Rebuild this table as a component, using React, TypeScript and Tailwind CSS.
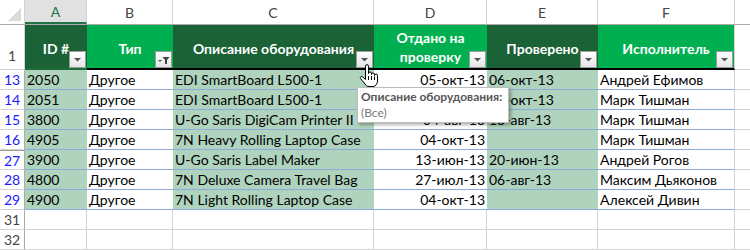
import React from 'react';

const colWidths = ['w-[62px]', 'w-[86px]', 'w-[201px]', 'w-[113px]', 'w-[111px]', 'w-[137px]'];
const letters = ['A', 'B', 'C', 'D', 'E', 'F'];
const headFills = ['bg-[#1b6236]', 'bg-[#00b050]', 'bg-[#1b6236]', 'bg-[#00b050]', 'bg-[#1b6236]', 'bg-[#00b050]'];
const bodyFills = ['bg-[#afd3bd]', 'bg-white', 'bg-[#afd3bd]', 'bg-white', 'bg-[#afd3bd]', 'bg-white'];

interface IRow {
    n: number;
    id: string;
    type: string;
    desc: string;
    sent: string;
    checked: string;
    person: string;
}

const rows: IRow[] = [
    { n: 13, id: '2050', type: 'Другое', desc: 'EDI SmartBoard L500-1', sent: '05-окт-13', checked: '06-окт-13', person: 'Андрей Ефимов' },
    { n: 14, id: '2051', type: 'Другое', desc: 'EDI SmartBoard L500-1', sent: '05-окт-13', checked: '06-окт-13', person: 'Марк Тишман' },
    { n: 15, id: '3800', type: 'Другое', desc: 'U-Go Saris DigiCam Printer II', sent: '04-авг-13', checked: '13-авг-13', person: 'Марк Тишман' },
    { n: 16, id: '4905', type: 'Другое', desc: '7N Heavy Rolling Laptop Case', sent: '04-окт-13', checked: '', person: 'Марк Тишман' },
    { n: 27, id: '3900', type: 'Другое', desc: 'U-Go Saris Label Maker', sent: '13-июн-13', checked: '20-июн-13', person: 'Андрей Рогов' },
    { n: 28, id: '4800', type: 'Другое', desc: '7N Deluxe Camera Travel Bag', sent: '27-июл-13', checked: '06-авг-13', person: 'Максим Дьяконов' },
    { n: 29, id: '4900', type: 'Другое', desc: '7N Light Rolling Laptop Case', sent: '04-окт-13', checked: '', person: 'Алексей Дивин' },
];

const FilterButton = ({ filtered }: { filtered?: boolean }) => (
    <div className="absolute right-[1px] bottom-0 w-[17px] h-[17px] border border-[#9c9c9c] bg-gradient-to-b from-white to-[#e4e4e4] flex items-center justify-center">
        {filtered ? (
            <svg width="15" height="15" viewBox="0 0 15 15">
                <polygon points="2,8 6,8 4,10" fill="#555" />
                <polygon points="6.5,5 13.5,5 11,8 11,12 9,12 9,8" fill="#444" />
            </svg>
        ) : (
            <svg width="15" height="15" viewBox="0 0 15 15">
                <polygon points="4,6 11,6 7.5,9.5" fill="#555" />
            </svg>
        )}
    </div>
);

const HandCursor = () => (
    <svg className="absolute left-[359px] top-[64px]" width="20" height="24" viewBox="0 0 20 24">
        <path
            d="M6.5 11 V2.2 a1.5 1.5 0 0 1 3 0 V9.5 a1.5 1.5 0 0 1 3 0 V10.5 a1.5 1.5 0 0 1 3 0 V11.5 a1.5 1.5 0 0 1 3 0 V17 c0 3 -2 5.5 -4.5 5.5 H10 c-2 0 -3 -1 -4 -2.5 L1.6 14.6 a1.3 1.3 0 0 1 2.1 -1.6 L6.5 15.5 Z"
            fill="white" stroke="black" strokeWidth="1" strokeLinejoin="round" />
        <path d="M9.5 12 V16 M12.5 12 V16 M15.5 12.5 V16" stroke="black" strokeWidth="1" />
    </svg>
);

const RowHeader = ({ n, blue, thick }: { n: number; blue?: boolean; thick?: boolean }) => (
    <div className={`w-[25px] shrink-0 h-full border-r border-[#ababab] border-b border-b-[#d4d4d4] flex items-center justify-center text-[14px] ${blue ? 'text-[#1a1aff]' : 'text-[#444]'} ${thick ? 'border-t border-t-[#9a9a9a]' : ''}`}>
        {n}
    </div>
);

const App = () => {
    return (
        <div className="w-[750px] h-[250px] overflow-hidden relative bg-white text-black" style={{ fontFamily: 'Lato, "Open Sans", sans-serif' }}>
            {/* column letters */}
            <div className="flex h-[25px] border-b border-[#ababab]">
                <div className="w-[25px] shrink-0 border-r border-[#d4d4d4] relative">
                    <svg className="absolute right-[3px] bottom-[3px]" width="13" height="13" viewBox="0 0 13 13">
                        <polygon points="13,0 13,13 0,13" fill="#dadada" />
                    </svg>
                </div>
                {letters.map((l, i) => (
                    <div key={l} className={`${colWidths[i]} shrink-0 border-r border-[#d4d4d4] flex items-center justify-center text-[14px] ${i === 0 ? 'bg-[#e1e1e1] text-[#217346] border-b-2 border-b-[#217346]' : 'text-[#444]'}`}>
                        {l}
                    </div>
                ))}
                <div className="flex-1" />
            </div>

            {/* table header row */}
            <div className="flex h-[45px]">
                <div className="w-[25px] shrink-0 border-r border-[#ababab] border-b border-[#d4d4d4] flex items-end justify-center pb-[3px] text-[14px] text-[#444]">1</div>
                <div className={`${colWidths[0]} shrink-0 relative ${headFills[0]} border-b-2 border-[#1e6b3a] flex items-center justify-center pt-[3px] text-white font-bold text-[14px]`}>
                    ID #
                    <FilterButton />
                </div>
                <div className={`${colWidths[1]} shrink-0 relative ${headFills[1]} border-b-2 border-black flex items-center justify-center pt-[3px] text-white font-bold text-[14px]`}>
                    Тип
                    <FilterButton filtered />
                </div>
                <div className={`${colWidths[2]} shrink-0 relative ${headFills[2]} border-b-2 border-black flex items-center justify-center pt-[3px] text-white font-bold text-[14px]`}>
                    Описание оборудования
                    <FilterButton />
                </div>
                <div className={`${colWidths[3]} shrink-0 relative ${headFills[3]} border-b-2 border-black flex items-center justify-center text-center leading-[19px] pt-[1px] text-white font-bold text-[14px]`}>
                    <span>Отдано на<br />проверку</span>
                    <FilterButton />
                </div>
                <div className={`${colWidths[4]} shrink-0 relative ${headFills[4]} border-b-2 border-black flex items-center justify-center pt-[3px] text-white font-bold text-[14px]`}>
                    Проверено
                    <FilterButton />
                </div>
                <div className={`${colWidths[5]} shrink-0 relative ${headFills[5]} border-b-2 border-black border-r border-r-[#d4d4d4] flex items-center justify-center pt-[3px] text-white font-bold text-[14px]`}>
                    Исполнитель
                    <FilterButton />
                </div>
                <div className="flex-1 border-b border-[#d4d4d4]" />
            </div>

            {/* filtered rows */}
            {rows.map((r) => {
                const cells = [r.id, r.type, r.desc, r.sent, r.checked, r.person];
                return (
                    <div key={r.n} className="flex h-[20px]">
                        <RowHeader n={r.n} blue thick={r.n === 27} />
                        {cells.map((c, i) => (
                            <div
                                key={i}
                                className={`${colWidths[i]} shrink-0 h-full ${bodyFills[i]} border-b border-[#8eaadb] ${i === 5 ? 'border-r border-r-[#d4d4d4]' : ''} flex items-center px-[2px] text-[14px] whitespace-nowrap overflow-hidden ${i === 3 ? 'justify-end' : ''}`}
                            >
                                {c}
                            </div>
                        ))}
                        <div className="flex-1 border-b border-[#d4d4d4]" />
                    </div>
                );
            })}

            {/* empty rows */}
            {[31, 32].map((n) => (
                <div key={n} className="flex h-[20px]">
                    <RowHeader n={n} />
                    {colWidths.map((w, i) => (
                        <div key={i} className={`${w} shrink-0 h-full border-r border-b border-[#d4d4d4]`} />
                    ))}
                    <div className="flex-1 border-b border-[#d4d4d4]" />
                </div>
            ))}

            <HandCursor />

            {/* filter tooltip */}
            <div className="absolute left-[357px] top-[87px] w-[152px] h-[36px] bg-white border border-[#bdbdbd] shadow-[2px_2px_3px_rgba(0,0,0,0.3)] px-[3px] pt-[1px] text-[12px] leading-[16px]">
                <div className="font-bold text-[#575757] whitespace-nowrap">Описание оборудования:</div>
                <div className="text-[#7a7a7a]">(Все)</div>
            </div>
        </div>
    );
};

export default App;
